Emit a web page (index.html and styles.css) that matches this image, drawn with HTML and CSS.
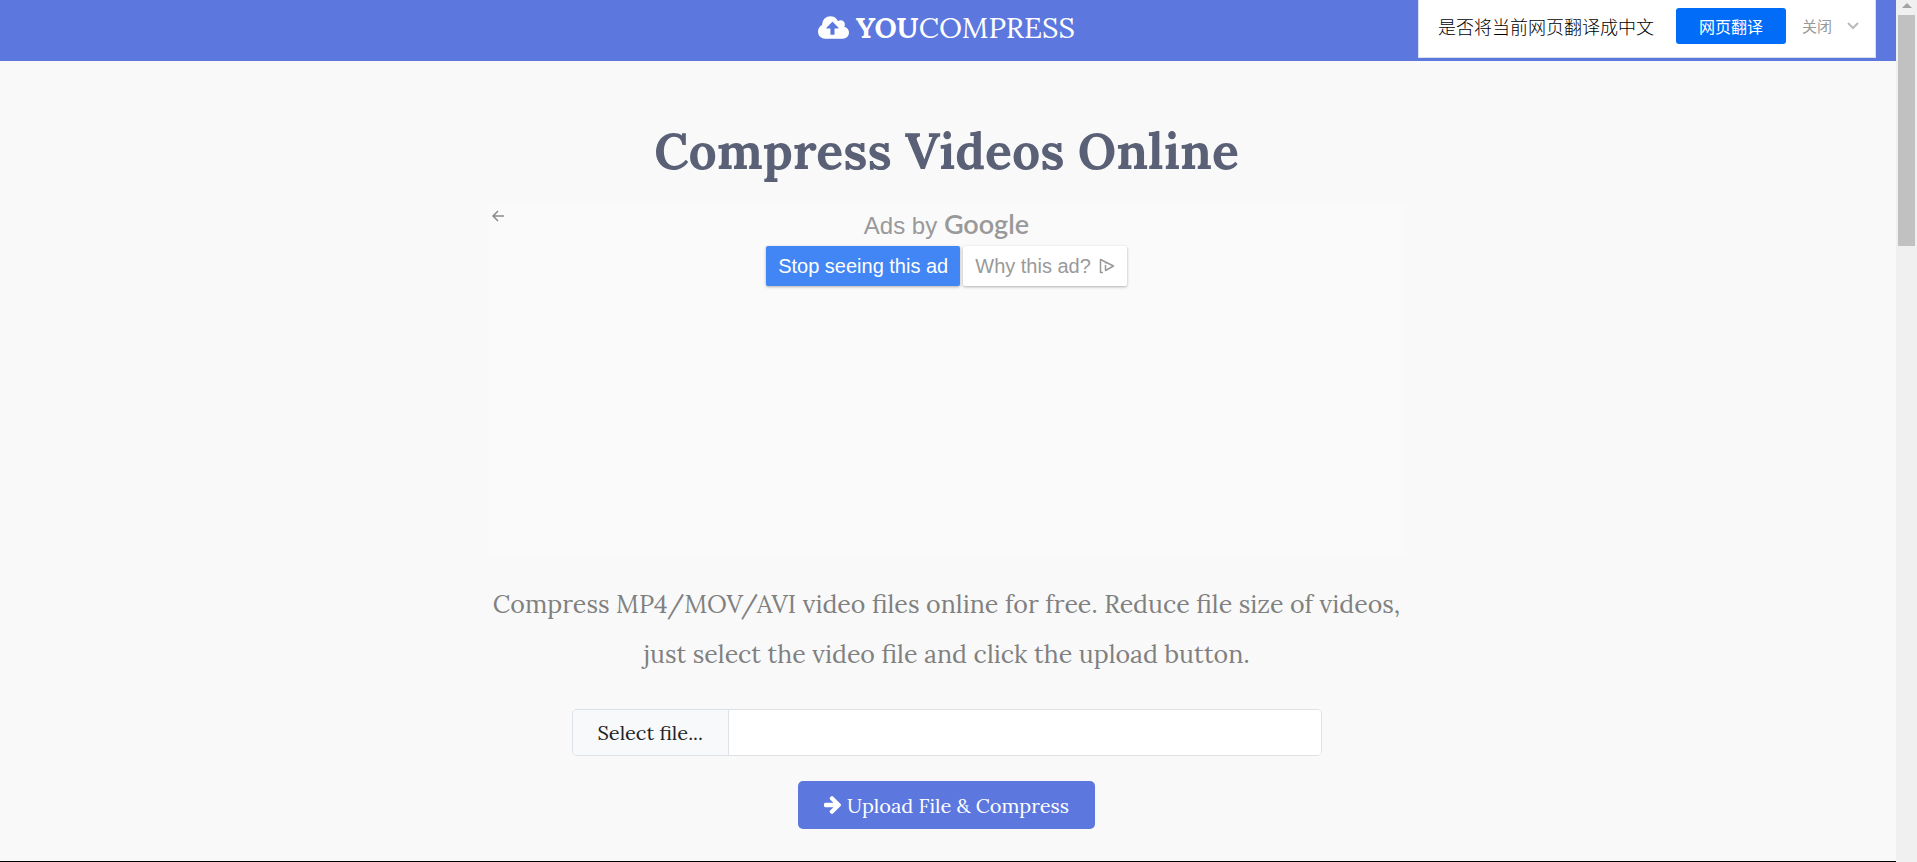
FILE: index.html
```
<!DOCTYPE html>
<html lang="en">
<head>
    <meta charset="UTF-8">
    <meta name="viewport" content="width=device-width, initial-scale=1.0">
    <title>Compress Videos Online</title>
    <link rel="stylesheet" href="styles.css">
</head>
<body>
    <div class="page">
        <header class="navbar">
            <a class="brand" href="#">
                <svg class="brand-icon" viewBox="-64 128 1920 1408" aria-hidden="true"><path fill="currentColor" d="M1216 864q0-14-9-23l-352-352q-9-9-23-9t-23 9l-351 351q-10 12-10 24 0 14 9 23t23 9h224v352q0 13 9.500 22.500t22.500 9.500h192q13 0 22.500-9.500t9.500-22.500v-352h224q13 0 22.500-9.500t9.500-22.500zm640 288q0 159-112.500 271.500t-271.500 112.500h-1088q-185 0-316.500-131.500t-131.500-316.500q0-130 70-240t188-165q-2-30-2-43 0-212 150-362t362-150q156 0 285.500 87t188.500 231q71-62 166-62 106 0 181 75t75 181q0 76-41 138 130 31 213.500 135.500t83.500 238.500z"/></svg>
                <span><strong>YOU</strong>COMPRESS</span>
            </a>
            <div class="translate" lang="zh-CN">
                <span class="translate-text">是否将当前网页翻译成中文</span>
                <button class="translate-btn" type="button">网页翻译</button>
                <button class="translate-close" type="button">关闭
                    <svg class="chevron" viewBox="0 0 12 8" aria-hidden="true"><path d="M1 1l5 5 5-5" fill="none" stroke="#bbb" stroke-width="2"/></svg>
                </button>
            </div>
        </header>

        <main class="container">
            <h1>Compress Videos Online</h1>

            <section class="ad">
                <button class="ad-back" type="button" aria-label="Back">
                    <svg viewBox="0 0 12 12" aria-hidden="true"><path d="M12 6H1M6 1L1 6l5 5" fill="none" stroke="#888" stroke-width="1.500"/></svg>
                </button>
                <p class="ad-title">Ads by <span class="ad-logo">Google</span></p>
                <div class="ad-buttons">
                    <button class="ad-btn ad-stop" type="button">Stop seeing this ad</button>
                    <button class="ad-btn ad-why" type="button">Why this ad?
                        <svg viewBox="0 0 16 16" aria-hidden="true"><path d="M4 14.500H1.500v-13L14.500 8 6.500 12.500V7M6.500 4v1.500" fill="none" stroke="#999" stroke-width="1.500" stroke-linejoin="round"/></svg>
                    </button>
                </div>
            </section>

            <p class="lead">Compress MP4/MOV/AVI video files online for free. Reduce file size of videos, just select the video file and click the upload button.</p>

            <form class="upload">
                <div class="file-group">
                    <label class="file-label" for="file">Select file...</label>
                    <input class="file-hidden" type="file" id="file" accept="video/*">
                    <input class="file-name" type="text" id="fileName" aria-label="Selected file" readonly>
                </div>
                <button class="upload-btn" type="submit">
                    <svg viewBox="128 181 1472 1558" aria-hidden="true"><path fill="currentColor" d="M1600 960q0 54-37 91l-651 651q-39 37-91 37-51 0-90-37l-75-75q-38-38-38-91t38-91l293-293H245q-52 0-84.500-37.500T128 1024V896q0-53 32.500-90.500T245 768h704L656 474q-38-36-38-90t38-90l75-75q38-38 90-38 53 0 91 38l651 651q37 35 37 90z"/></svg>
                    Upload File &amp; Compress
                </button>
            </form>
        </main>

        <footer class="footer"></footer>
    </div>

    <div class="scrollbar" aria-hidden="true">
        <svg class="scroll-arrow" viewBox="0 0 10 5"><path d="M0 5l5-5 5 5z" fill="#a3a3a3"/></svg>
        <div class="scroll-thumb"></div>
    </div>

    <script>
        // Show the chosen file's name
        document.getElementById('file').addEventListener('change', function() {
            document.getElementById('fileName').value = this.files.length ? this.files[0].name : '';
        });
    </script>
</body>
</html>
```
FILE: styles.css
```
* {
    margin: 0;
    padding: 0;
    box-sizing: border-box;
}

body {
    display: flex;
    min-height: 100vh;
    background-color: #f9f9f9;
    font-family: Lora, "Liberation Serif", serif;
}

button,
input {
    font-family: inherit;
}

button {
    border: none;
    cursor: pointer;
}

.page {
    flex: 1;
    display: flex;
    flex-direction: column;
}

/* Header */
.navbar {
    position: relative;
    display: flex;
    justify-content: center;
    height: 61px;
    padding: 8px 3px 0 0;
    background-color: #5c78df;
}

.brand {
    display: flex;
    align-items: center;
    gap: 7px;
    height: 38px;
    color: white;
    font-size: 29px;
    text-decoration: none;
}

.brand-icon {
    width: 31px;
    height: 23px;
}

/* Translate prompt over the header */
.translate {
    position: absolute;
    top: 0;
    right: 20px;
    display: flex;
    align-items: center;
    height: 58px;
    padding: 0 16px 6px 19px;
    background: white;
    border: 1px solid #dcdfe8;
    border-top: none;
    font-family: "Noto Sans CJK SC", sans-serif;
}

.translate-text {
    color: black;
    font-size: 18px;
    font-weight: 300;
    margin-right: 22px;
}

.translate-btn {
    width: 110px;
    height: 36px;
    margin-right: 16px;
    background-color: #006cf8;
    border-radius: 3px;
    color: white;
    font-size: 16px;
}

.translate-close {
    display: flex;
    align-items: center;
    gap: 15px;
    background: none;
    color: #999;
    font-size: 15px;
}

.chevron {
    width: 12px;
    height: 8px;
}

/* Content */
.container {
    flex: 1;
    width: 100%;
    max-width: 921px;
    margin: 0 auto;
    padding: 56px 3px 0 0;
    text-align: center;
}

h1 {
    color: #5a6075;
    font-size: 50px;
    line-height: 68px;
    margin-bottom: 20px;
}

.ad {
    position: relative;
    min-height: 350px;
    margin-bottom: 24px;
    padding-top: 3px;
    background-color: #fafafa;
    color: #999;
    font-family: "Liberation Sans", Arial, sans-serif;
}

.ad-back {
    position: absolute;
    top: 5px;
    left: 4px;
    width: 12px;
    height: 12px;
    background: none;
}

.ad-back svg {
    display: block;
}

.ad-title {
    font-size: 24px;
    line-height: 32px;
}

.ad-logo {
    font-family: Lato, sans-serif;
    font-size: 27px;
    font-weight: 600;
}

.ad-buttons {
    display: flex;
    justify-content: center;
    gap: 3px;
    margin-top: 4px;
}

.ad-btn {
    display: flex;
    align-items: center;
    gap: 8px;
    height: 40px;
    padding: 0 12px;
    border-radius: 2px;
    box-shadow: 0 1px 3px rgba(0,0,0,0.3);
    font-size: 20px;
}

.ad-stop {
    background-color: #4285f4;
    color: white;
}

.ad-why {
    background-color: white;
    color: #999;
}

.ad-why svg {
    width: 16px;
    height: 16px;
}

.lead {
    color: #808080;
    font-size: 25px;
    line-height: 50px;
}

/* Upload form */
.upload {
    display: flex;
    flex-direction: column;
    align-items: center;
    gap: 25px;
    padding: 30px 0;
}

.file-group {
    position: relative;
    display: flex;
    width: 100%;
    max-width: 750px;
    height: 47px;
    border: 1px solid #dee2e6;
    border-radius: 5px;
    background: white;
    overflow: hidden;
}

.file-label {
    padding: 0 25px;
    background-color: #f8f9fa;
    border-right: 1px solid #dee2e6;
    color: #212529;
    font-size: 20px;
    line-height: 45px;
    cursor: pointer;
}

.file-hidden {
    position: absolute;
    width: 1px;
    height: 1px;
    opacity: 0;
}

.file-name {
    flex: 1;
    padding: 0 12px;
    border: none;
    outline: none;
    font-size: 20px;
}

.upload-btn {
    display: flex;
    align-items: center;
    gap: 6px;
    height: 48px;
    padding: 0 26px;
    background-color: #5c78df;
    border-radius: 5px;
    color: white;
    font-size: 20px;
}

.upload-btn svg {
    width: 17px;
    height: 18px;
}

.footer {
    height: 1px;
    background-color: black;
}

/* Scrollbar */
.scrollbar {
    width: 21px;
    padding: 3px 2px 0;
    background-color: #f0f0f0;
}

.scroll-arrow {
    display: block;
    width: 10px;
    height: 5px;
    margin: 0 auto 7px;
}

.scroll-thumb {
    height: 231px;
    background-color: #c1c1c1;
}
```
